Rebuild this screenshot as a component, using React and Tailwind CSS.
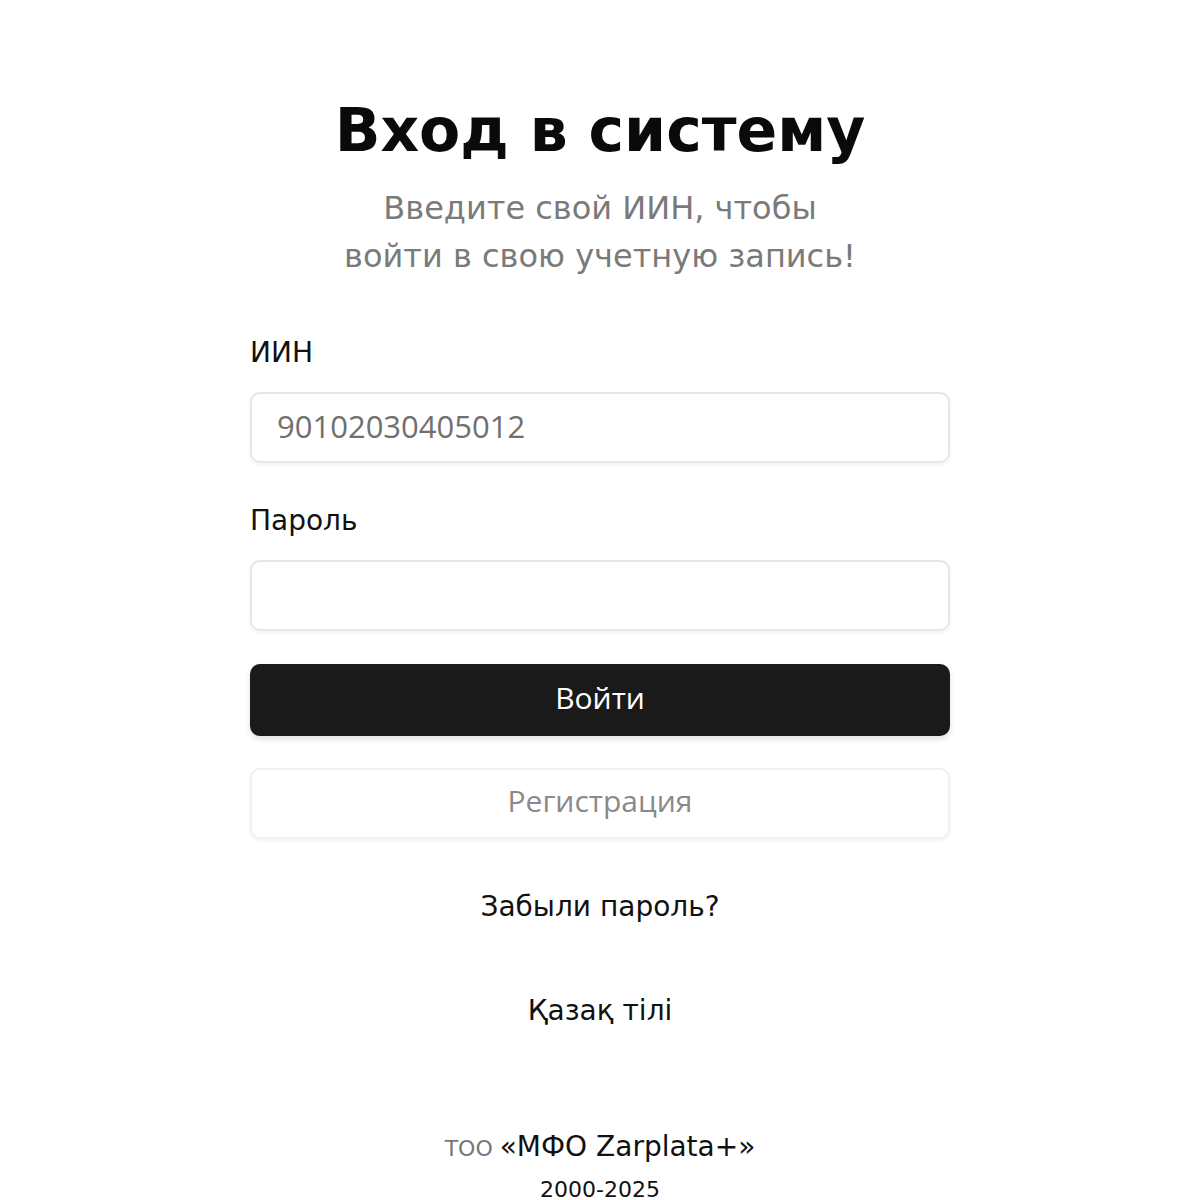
export default function App() {
  return (
    <div className="min-h-screen bg-white font-['DejaVu_Sans',sans-serif] text-[#111]">
      <div className="mx-auto flex w-[700px] flex-col items-stretch pt-[92px]">
        <h1 className="text-center text-[60px] font-bold leading-[76px] text-[#0a0a0a]">
          Вход в систему
        </h1>
        <p className="mt-[16px] text-center text-[32px] leading-[48px] text-[#7a7a7a]">
          Введите свой ИИН, чтобы
          <br />
          войти в свою учетную запись!
        </p>

        <label className="mt-[53px] text-[28px] leading-[40px]">ИИН</label>
        <input
          defaultValue="90102030405012"
          className="mt-[19px] h-[71px] rounded-[10px] border-2 border-[#e6e6e6] px-[25px] pb-[4px] font-['Open_Sans',sans-serif] text-[31px] text-[#707070] shadow-[0_2px_4px_rgba(0,0,0,0.06)] outline-none"
        />

        <label className="mt-[38px] text-[28px] leading-[40px]">Пароль</label>
        <input
          type="password"
          className="mt-[19px] h-[71px] rounded-[10px] border-2 border-[#e6e6e6] px-[25px] font-['Open_Sans',sans-serif] text-[31px] shadow-[0_2px_4px_rgba(0,0,0,0.06)] outline-none"
        />

        <button className="mt-[33px] h-[72px] rounded-[10px] bg-[#1a1a1a] pb-[6px] font-['Open_Sans',sans-serif] text-[30px] text-white shadow-[0_3px_6px_rgba(0,0,0,0.12)]">
          Войти
        </button>

        <button className="mt-[32px] h-[71px] rounded-[10px] border-2 border-[#f0f0f0] bg-white pb-[6px] font-['Open_Sans',sans-serif] text-[30px] text-[#8a8a8a] shadow-[0_2px_4px_rgba(0,0,0,0.05)]">
          Регистрация
        </button>

        <a className="mt-[48px] text-center text-[28px] leading-[40px] text-[#111]">
          Забыли пароль?
        </a>
        <a className="mt-[64px] text-center text-[28px] leading-[40px] text-[#111]">
          Қазақ тілі
        </a>

        <div className="mt-[96px] text-center leading-[40px]">
          <span className="text-[22px] text-[#777]">ТОО </span>
          <span className="text-[28px] text-[#111]">«МФО Zarplata+»</span>
        </div>
        <div className="mt-[4px] text-center text-[22px] leading-[30px] text-[#111]">
          2000-2025
        </div>
      </div>
    </div>
  );
}
